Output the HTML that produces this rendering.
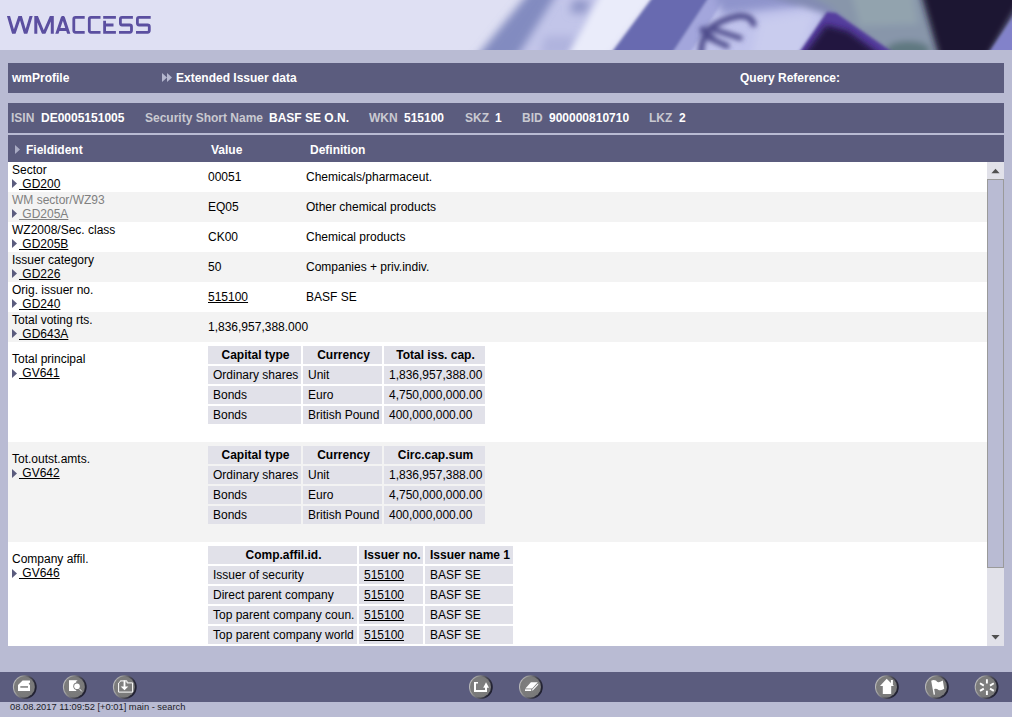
<!DOCTYPE html>
<html>
<head>
<meta charset="utf-8">
<title>WM Access</title>
<style>
html,body{margin:0;padding:0;}
body{width:1012px;height:717px;overflow:hidden;background:#b9bbd3;font-family:"Liberation Sans",sans-serif;font-size:12px;line-height:14px;color:#000;position:relative;}
#hdr{position:absolute;left:0;top:0;width:1012px;height:50px;background:#dfe0f3;overflow:hidden;}
#hdr svg{position:absolute;left:0;top:0;}
.bar{position:absolute;left:8px;width:996px;background:#5b5c7e;color:#fff;font-weight:bold;}
.bar span{position:absolute;white-space:nowrap;}
#bar1{top:63px;height:30px;}
#bar1 span{top:8px;}
#bar2{top:103px;height:30px;}
#bar2 span{top:8px;}
#bar2 .k{color:#c9c9d1;}
#bar3{top:135px;height:27px;}
#bar3 span{top:8px;}
.tri{position:absolute;width:5px;height:9px;background:#5b5c7e;clip-path:polygon(0 0,100% 50%,0 100%);}
#scroll{position:absolute;left:8px;top:162px;width:979px;height:484px;background:#fff;overflow:hidden;}
.row{position:absolute;left:0;width:979px;}
.g{background:#f3f3f3;}
.row span{position:absolute;white-space:nowrap;}
.row .l1{left:4px;}
.row .l2{left:11px;text-decoration:underline;white-space:pre;}
.row .tri{left:4px;}
.gray{color:#808080;}
u{text-decoration:underline;}
table.in{position:absolute;left:198px;border-collapse:separate;border-spacing:2px;table-layout:fixed;}
table.in td,table.in th{background:#e1e1e9;padding:2px 0 2px 5px;height:14px;overflow:hidden;line-height:14px;font-size:12px;white-space:nowrap;text-align:left;}
table.in th{text-align:center;font-weight:bold;padding-right:3px;}
#sb{position:absolute;left:987px;top:162px;width:17px;height:484px;background:#e1e1e9;}
#thumb{position:absolute;left:0;top:17px;width:15px;height:387px;background:#b9bbd3;border:1px solid #9a9a9a;}
.arr{position:absolute;left:4px;width:0;height:0;border-left:4.5px solid transparent;border-right:4.5px solid transparent;}
#foot{position:absolute;left:0;top:672px;}
#status{position:absolute;left:10px;top:702px;font-size:9.33px;line-height:11px;color:#1c1c28;white-space:nowrap;}
.btn{position:absolute;top:2px;width:24px;height:24px;}
</style>
</head>
<body>
<div id="hdr">
<svg width="1012" height="50" viewBox="0 0 1012 50">
<defs>
<filter id="b3" x="-10%" y="-50%" width="120%" height="200%"><feGaussianBlur stdDeviation="3"/></filter>
<filter id="b2" x="-10%" y="-50%" width="120%" height="200%"><feGaussianBlur stdDeviation="1.8"/></filter>
<filter id="b4" x="-10%" y="-50%" width="120%" height="200%"><feGaussianBlur stdDeviation="4.5"/></filter>
<filter id="b25" x="-20%" y="-50%" width="140%" height="200%"><feGaussianBlur stdDeviation="2.6"/></filter>
<filter id="b6" x="-10%" y="-50%" width="120%" height="200%"><feGaussianBlur stdDeviation="6"/></filter>
<clipPath id="lc"><rect x="0" y="16" width="160" height="17.8"/></clipPath>
</defs>
<g id="photo">
<g filter="url(#b6)">
<polygon points="540,-10 640,-10 590,60 490,60" fill="#c2c5e9"/>
</g>
<g filter="url(#b4)">
<polygon points="531,-10 559,-10 515,60 474,60" fill="#828bc0"/>
<polygon points="573,0 590,0 586,13 570,13" fill="#9096c8"/>
<polygon points="545,36 575,36 570,56 540,56" fill="#b0b4de"/>
</g>
<g filter="url(#b3)">
<polygon points="603,-10 658,-10 604,60 566,60" fill="#eaecfa"/>
</g>
<g filter="url(#b2)">
<polygon points="658,-10 716,-10 668,60 606,60" fill="#686bb0"/>
<polygon points="714,-10 1020,-10 1020,60 668,60" fill="#c0c3ec"/>
<polygon points="714,-10 730,-10 686,60 668,60" fill="#a3a6dc"/>
</g>
<g filter="url(#b4)">
<polygon points="712,-12 800,-12 800,6 722,14" fill="#8f94cc"/>
<polygon points="760,20 815,12 800,60 750,60" fill="#c9ccee"/>
</g>
<g filter="url(#b3)">
<polygon points="748,-10 1020,-10 1020,60 805,60 826,14" fill="#838bb4"/>
<polygon points="800,-10 935,-10 945,60 880,60 832,8" fill="#8896aa"/>
<polygon points="850,-10 912,-10 918,24 860,26" fill="#92a3ae"/>
<ellipse cx="908" cy="50" rx="22" ry="9" fill="#5f7880"/>
</g>
<g filter="url(#b2)">
<polygon points="827,12 836,13 904,60 794,60" fill="#553c9e"/>
</g>
<g filter="url(#b3)">
<polygon points="826,25 848,31 888,60 800,60" fill="#231640"/>
</g>
<g filter="url(#b3)">
<polygon points="920,-10 1020,-10 1020,2 986,60 940,60" fill="#1f1630"/>
</g>
<g filter="url(#b2)">
<polygon points="1022,4 1022,60 984,60" fill="#8282ca"/>
</g>
<g filter="url(#b25)" fill="none" stroke="#4f4e8c" stroke-width="6" stroke-linecap="round">
<path d="M753.5,24 Q751,15 739,16 Q722,19 709,29 Q702,36 701,52"/>
<path d="M709,28 L740,38" stroke-width="5.5"/>
<path d="M705,36 L727,46" stroke-width="5.5"/>
<path d="M703,30 L712,38" stroke-width="7"/>
</g>
</g>
<g id="logo" fill="none" stroke="#5b4fa0" stroke-width="2.8" stroke-linejoin="miter">
<g clip-path="url(#lc)" stroke-width="3">
<path d="M7.63,13 L14.57,37 M12.88,37 L20.98,13 M19.42,13 L26.48,37 M24.82,37 L32,13"/>
<path d="M35.8,13 V37 M35.07,13 L44.93,37 M52.8,13 L42.4,37 M52.3,13 V37"/>
<path d="M55.8,37 L63.92,13 M61.88,13 L69.8,37 M59,29.5 H67"/>
</g>
<path d="M84.7,17.3 H75.5 Q73.8,17.3 73.8,19 V30.6 Q73.8,32.3 75.5,32.3 H84.7"/>
<path d="M100.5,17.3 H91 Q89.3,17.3 89.3,19 V30.6 Q89.3,32.3 91,32.3 H100.5"/>
<path d="M103.2,17.3 H115.9 M104.6,20.8 V32.3 H115.9 M104.6,25 H113.5"/>
<path d="M132.9,17.3 H122 Q120.4,17.3 120.4,19 V23.3 Q120.4,25 122,25 H129.8 Q131.5,25 131.5,26.7 V30.6 Q131.5,32.3 129.8,32.3 H119"/>
<path d="M150.7,17.3 H139 Q137.4,17.3 137.4,19 V23.3 Q137.4,25 139,25 H147.6 Q149.3,25 149.3,26.7 V30.6 Q149.3,32.3 147.6,32.3 H136"/>
</g>
</svg>
</div>

<div class="bar" id="bar1">
<span style="left:4px">wmProfile</span>
<i class="tri" style="left:154px;top:10px;background:#b5b7cf"></i><i class="tri" style="left:159px;top:10px;background:#b5b7cf"></i><span style="left:168px">Extended Issuer data</span>
<span style="left:732px">Query Reference:</span>
</div>

<div class="bar" id="bar2">
<span class="k" style="left:3px">ISIN</span><span style="left:33px">DE0005151005</span>
<span class="k" style="left:137px">Security Short Name</span><span style="left:261px">BASF SE O.N.</span>
<span class="k" style="left:361px">WKN</span><span style="left:396px">515100</span>
<span class="k" style="left:457px">SKZ</span><span style="left:487px">1</span>
<span class="k" style="left:514px">BID</span><span style="left:541px">900000810710</span>
<span class="k" style="left:641px">LKZ</span><span style="left:671px">2</span>
</div>

<div class="bar" id="bar3">
<i class="tri" style="left:7px;top:10px;background:#aaacc4"></i><span style="left:18px">Fieldident</span>
<span style="left:203px">Value</span>
<span style="left:302px">Definition</span>
</div>

<div id="scroll">
<div class="row" style="top:0;height:30px"><span class="l1" style="top:1px">Sector</span><i class="tri" style="top:17px"></i><span class="l2" style="top:15px"> GD200</span><span style="left:200px;top:8px">00051</span><span style="left:298px;top:8px">Chemicals/pharmaceut.</span></div>
<div class="row g" style="top:30px;height:30px"><span class="l1 gray" style="top:1px">WM sector/WZ93</span><i class="tri" style="top:17px"></i><span class="l2 gray" style="top:15px"> GD205A</span><span style="left:200px;top:8px">EQ05</span><span style="left:298px;top:8px">Other chemical products</span></div>
<div class="row" style="top:60px;height:30px"><span class="l1" style="top:1px">WZ2008/Sec. class</span><i class="tri" style="top:17px"></i><span class="l2" style="top:15px"> GD205B</span><span style="left:200px;top:8px">CK00</span><span style="left:298px;top:8px">Chemical products</span></div>
<div class="row g" style="top:90px;height:30px"><span class="l1" style="top:1px">Issuer category</span><i class="tri" style="top:17px"></i><span class="l2" style="top:15px"> GD226</span><span style="left:200px;top:8px">50</span><span style="left:298px;top:8px">Companies + priv.indiv.</span></div>
<div class="row" style="top:120px;height:30px"><span class="l1" style="top:1px">Orig. issuer no.</span><i class="tri" style="top:17px"></i><span class="l2" style="top:15px"> GD240</span><span style="left:200px;top:8px"><u>515100</u></span><span style="left:298px;top:8px">BASF SE</span></div>
<div class="row g" style="top:150px;height:30px"><span class="l1" style="top:1px">Total voting rts.</span><i class="tri" style="top:17px"></i><span class="l2" style="top:15px"> GD643A</span><span style="left:200px;top:8px">1,836,957,388.000</span></div>

<div class="row" style="top:180px;height:100px"><span class="l1" style="top:10px">Total principal</span><i class="tri" style="top:27px"></i><span class="l2" style="top:24px"> GV641</span>
<table class="in" style="top:2px;width:281px"><col style="width:93px"><col style="width:79px"><col style="width:101px"><tr><th>Capital type</th><th>Currency</th><th>Total iss. cap.</th></tr>
<tr><td>Ordinary shares</td><td>Unit</td><td>1,836,957,388.00</td></tr>
<tr><td>Bonds</td><td>Euro</td><td>4,750,000,000.00</td></tr>
<tr><td>Bonds</td><td>British Pound</td><td>400,000,000.00</td></tr></table></div>

<div class="row g" style="top:280px;height:100px"><span class="l1" style="top:10px">Tot.outst.amts.</span><i class="tri" style="top:27px"></i><span class="l2" style="top:24px"> GV642</span>
<table class="in" style="top:2px;width:281px"><col style="width:93px"><col style="width:79px"><col style="width:101px"><tr><th>Capital type</th><th>Currency</th><th>Circ.cap.sum</th></tr>
<tr><td>Ordinary shares</td><td>Unit</td><td>1,836,957,388.00</td></tr>
<tr><td>Bonds</td><td>Euro</td><td>4,750,000,000.00</td></tr>
<tr><td>Bonds</td><td>British Pound</td><td>400,000,000.00</td></tr></table></div>

<div class="row" style="top:380px;height:104px"><span class="l1" style="top:10px">Company affil.</span><i class="tri" style="top:27px"></i><span class="l2" style="top:24px"> GV646</span>
<table class="in" style="top:2px;width:309px"><col style="width:149px"><col style="width:64px"><col style="width:88px"><tr><th>Comp.affil.id.</th><th>Issuer no.</th><th>Issuer name 1</th></tr>
<tr><td>Issuer of security</td><td><u>515100</u></td><td>BASF SE</td></tr>
<tr><td>Direct parent company</td><td><u>515100</u></td><td>BASF SE</td></tr>
<tr><td>Top parent company coun.</td><td><u>515100</u></td><td>BASF SE</td></tr>
<tr><td>Top parent company world</td><td><u>515100</u></td><td>BASF SE</td></tr></table></div>
</div>

<div id="sb">
<div id="thumb"></div>
<svg width="17" height="484" viewBox="987 162 17 484" style="position:absolute;left:0;top:0"><polygon points="991.4,173.2 999.6,173.2 995.5,168.7" fill="#505050"/><polygon points="991.4,635 999.6,635 995.5,639.4" fill="#505050"/></svg>
</div>

<svg id="foot" width="1012" height="30" viewBox="0 672 1012 30">
<defs>
<linearGradient id="rim" x1="0" y1="0.35" x2="1" y2="0.65">
<stop offset="0" stop-color="#c4c4c4"/><stop offset="0.3" stop-color="#8e8e8e"/><stop offset="0.6" stop-color="#4c4c56"/><stop offset="0.8" stop-color="#2a2a3a"/><stop offset="1" stop-color="#1c1c2c"/>
</linearGradient>
<radialGradient id="face" cx="0.45" cy="0.45" r="0.6">
<stop offset="0" stop-color="#808080"/><stop offset="1" stop-color="#787878"/>
</radialGradient>
<g id="bt"><circle r="11.9" fill="url(#rim)"/><circle cx="-0.4" cy="-0.2" r="10.5" fill="url(#face)"/></g>
</defs>
<rect x="0" y="672" width="1012" height="30" fill="#5b5c7e"/>
<use href="#bt" x="24.8" y="687.1"/>
<use href="#bt" x="74.8" y="687.1"/>
<use href="#bt" x="124.8" y="687.1"/>
<use href="#bt" x="480.9" y="687.1"/>
<use href="#bt" x="530.9" y="687.1"/>
<use href="#bt" x="886.9" y="687.1"/>
<use href="#bt" x="936.9" y="687.1"/>
<use href="#bt" x="986.6" y="687.1"/>
<g fill="#fff">
<!-- print -->
<path d="M22.6,680.4 H30 V682.4 L28.6,683.7 L30,685 V691 H18 V685 Z"/>
<rect x="20.3" y="686.2" width="7.7" height="1.5" fill="#7c7c7c"/>
<!-- preview -->
<rect x="69" y="680.2" width="7.2" height="10.8"/>
<rect x="76.2" y="680.2" width="1" height="1"/>
<circle cx="77" cy="686.2" r="3.7" fill="#7c7c7c"/>
<circle cx="77" cy="686.2" r="2.8"/>
<path d="M79.3,688.7 L81.8,691.4" stroke="#fff" stroke-width="0.9" fill="none"/>
<!-- save -->
<path d="M118.6,692.1 V683 L120.3,681.5 V680.9 H127 V682.9 H132.6 V692.1 Z" fill="none" stroke="#fff" stroke-width="1"/>
<rect x="123.6" y="680.4" width="1.8" height="6.5"/>
<path d="M120.7,686.6 H128.3 L124.5,690.2 Z"/>
<!-- export -->
<path d="M474,682 H478 V683.6 H476 V690 H485 V687 H487 V692 H474 Z"/>
<path d="M486,682.3 L489,687.8 H483.2 Z"/>
<!-- eraser -->
<path d="M530.9,682.3 H537.8 L532.2,688.4 H525.4 Z"/>
<rect x="525" y="689.3" width="6.2" height="1.7"/>
<path d="M532.4,689.2 L538.2,683.2 V684.8 L532.4,691 Z"/>
<!-- home -->
<path d="M886.7,678.7 L890.9,682.9 V680 H892.9 V684.9 L894.1,686 H891.2 V694 H882.8 V686 H880 Z"/>
<!-- flag -->
<path d="M931.2,680.8 Q933.5,679.4 936,680.6 Q937.2,682.6 938.8,682.2 Q940.8,681.9 942.8,680.6 L944.2,688.8 Q941.5,690.8 938.5,690 Q936.5,688 934.2,689 L935,694.6 L933.7,694.8 Z"/>
</g>
<g stroke="#fff" stroke-width="1.9" fill="none" transform="translate(986.9 687.1)">
<path d="M0,-3.7 V-7.9 M0,3.7 V7.9 M3.1,-1.5 L6.9,-3.8 M3.1,1.5 L6.9,3.8 M-3.1,-1.5 L-6.9,-3.8 M-3.1,1.5 L-6.9,3.8"/>
</g>
</svg>
<div id="status">08.08.2017 11:09:52 [+0:01] main - search</div>
</body>
</html>
